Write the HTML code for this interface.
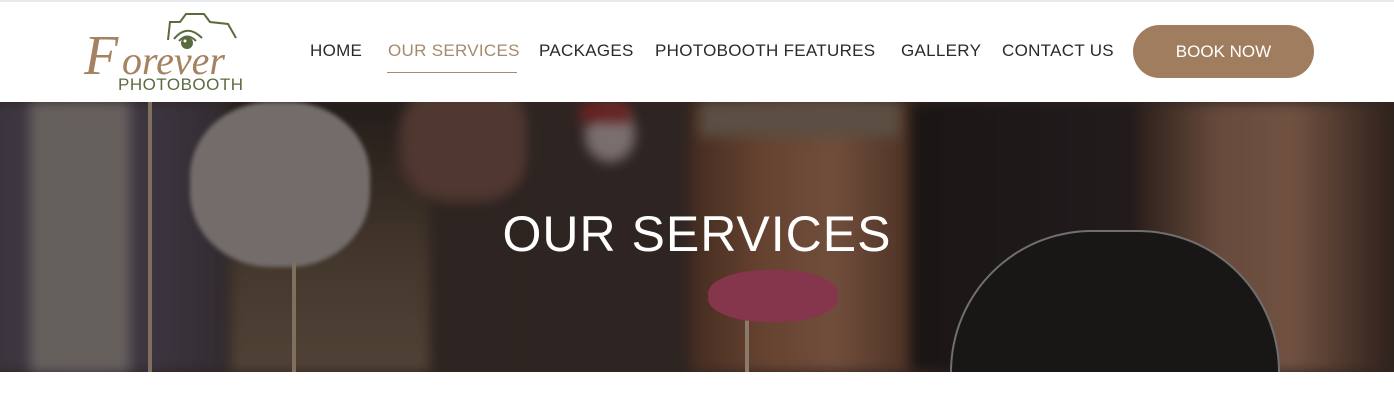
<!DOCTYPE html>
<html style="width:1394px;height:408px;overflow:hidden"><head><meta charset="utf-8"><style>
*{margin:0;padding:0;box-sizing:border-box}
body{width:1394px;height:408px;background:#fff;font-family:"Liberation Sans",sans-serif;overflow:hidden;position:relative}
.top{position:absolute;left:0;top:0;width:1394px;height:2px;background:#e6e8ee}
.nav{position:absolute;top:41px;font-size:17px;color:#2a2a2a;letter-spacing:.3px}
.hero{position:absolute;left:0;top:102px;width:1394px;height:270px;overflow:hidden;background:#3a2e2a}
.hero div{position:absolute}
.bl{filter:blur(6px)}
</style></head><body>
<div class="top"></div>
<svg style="position:absolute;left:80px;top:8px" width="180" height="88" viewBox="0 0 180 88">
<path d="M88 32 L90 14 L100 14 L106 6 L124 6 L130 14 L148 16 L156 30" fill="none" stroke="#5a6b3f" stroke-width="2"/>
<path d="M94 31 Q107 15 122 30" fill="none" stroke="#5a6b3f" stroke-width="2"/>
<path d="M99 33 Q107 24 116 33" fill="none" stroke="#5a6b3f" stroke-width="2"/>
<circle cx="107" cy="35" r="6" fill="#5a6b3f"/><circle cx="105" cy="33" r="1.5" fill="#fff"/>
<text x="4" y="66" font-family="Liberation Serif,serif" font-style="italic" font-size="56" fill="#a58260">F</text>
<text x="42" y="66" font-family="Liberation Serif,serif" font-style="italic" font-size="40" fill="#a58260">orever</text>
<text x="38" y="82" font-family="Liberation Sans,sans-serif" font-size="17" fill="#5a6b3f" textLength="125">PHOTOBOOTH</text>
</svg>
<div class="nav" style="left:310px">HOME</div>
<div class="nav" style="left:388px;color:#a58a6d">OUR SERVICES</div>
<div style="position:absolute;left:387px;top:72px;width:130px;height:1px;background:#a58a6d"></div>
<div class="nav" style="left:539px">PACKAGES</div>
<div class="nav" style="left:655px">PHOTOBOOTH FEATURES</div>
<div class="nav" style="left:901px">GALLERY</div>
<div class="nav" style="left:1002px">CONTACT US</div>
<div style="position:absolute;left:1133px;top:25px;width:181px;height:53px;border-radius:27px;background:#a17d60;color:#fff;font-size:17px;text-align:center;line-height:53px">BOOK NOW</div>
<div class="hero">
<div class="bl" style="left:-10px;top:0;width:240px;height:270px;background:linear-gradient(90deg,#4a4550,#5a5468 40%,#3e3840)"></div>
<div class="bl" style="left:30px;top:0;width:100px;height:270px;background:#8a8480"></div>
<div class="bl" style="left:230px;top:0;width:200px;height:270px;background:linear-gradient(180deg,#2c2420,#5a4a3a 60%,#6a5a48)"></div>
<div class="bl" style="left:400px;top:-20px;width:130px;height:120px;background:#6a4a40;border-radius:40%"></div>
<div class="bl" style="left:530px;top:0;width:170px;height:270px;background:#3a302c"></div>
<div class="bl" style="left:585px;top:5px;width:50px;height:55px;background:#a89a98;border-radius:50%"></div>
<div class="bl" style="left:580px;top:0;width:50px;height:20px;background:#8a2a2a"></div>
<div class="bl" style="left:690px;top:0;width:240px;height:270px;background:linear-gradient(90deg,#5a3a28,#8a5a40 30%,#9a6a50 60%,#5a3a28)"></div>
<div class="bl" style="left:700px;top:0;width:200px;height:35px;background:#7a6a5a"></div>
<div class="bl" style="left:910px;top:0;width:230px;height:270px;background:linear-gradient(90deg,#1e1a1a,#2a2224)"></div>
<div class="bl" style="left:1140px;top:0;width:254px;height:270px;background:linear-gradient(90deg,#3a2a22,#8a6450 30%,#9a7058 60%,#3a2a22)"></div>
<div style="left:190px;top:0;width:180px;height:165px;background:#9c9694;border-radius:45%;filter:blur(2px)"></div>
<div style="left:148px;top:0;width:4px;height:270px;background:#b09a80"></div>
<div style="left:292px;top:160px;width:4px;height:110px;background:#b09a80"></div>
<div style="left:745px;top:215px;width:4px;height:55px;background:#c0a890"></div>
<div style="left:708px;top:168px;width:130px;height:52px;background:#b84868;border-radius:45%"></div>
<div style="left:950px;top:128px;width:330px;height:142px;background:#1c1a1a;border-radius:160px 160px 0 0;border:2px solid #999;border-bottom:none"></div>
<div style="left:0;top:0;width:1394px;height:270px;background:rgba(20,14,12,.3)"></div>
<div style="left:0;top:103px;width:1394px;text-align:center;color:#fff;font-size:50px;letter-spacing:1px">OUR SERVICES</div>
</div>
</body></html>
